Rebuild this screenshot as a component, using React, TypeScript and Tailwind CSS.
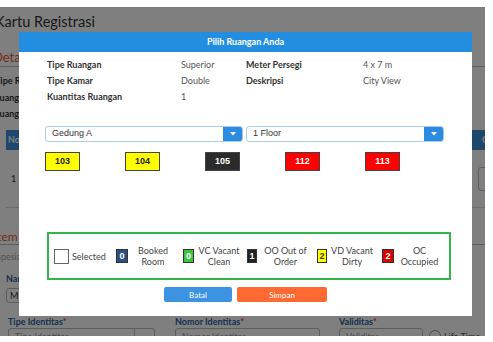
import React from "react";

const lato = { fontFamily: "Lato, 'Open Sans', sans-serif" };
const arial = { fontFamily: "'Liberation Sans', Arial, sans-serif" };

function Caret() {
  return (
    <svg width="6" height="4" viewBox="0 0 6 4">
      <path d="M0 0 L6 0 L3 3.5 Z" fill="#ffffff" />
    </svg>
  );
}

function SelectBox({ label }: { label: string }) {
  return (
    <div className="flex h-[16px] w-[198px] items-stretch rounded-[3px] border border-[#a8cdf0] bg-white">
      <div className="flex flex-1 items-center pl-[6px] text-[9px] text-[#333]" style={arial}>
        {label}
      </div>
      <div className="flex w-[19px] items-center justify-center rounded-r-[2px] bg-[#2a8be0]">
        <Caret />
      </div>
    </div>
  );
}

function Room({ n, bg, fg }: { n: string; bg: string; fg: string }) {
  return (
    <div
      className={`flex h-[19px] w-[35px] items-center justify-center border border-[#444] text-[9px] font-bold ${bg} ${fg}`}
      style={arial}
    >
      {n}
    </div>
  );
}

function Badge({ n, cls, w }: { n: string; cls: string; w: string }) {
  return (
    <div className={`flex h-[14px] shrink-0 items-center justify-center border border-[#333] text-[9px] font-bold ${w} ${cls}`} style={arial}>
      {n}
    </div>
  );
}

export default function App() {
  return (
    <div className="h-[342px] w-[493px] bg-white" style={lato}>
      <div className="relative mt-[7px] h-[329px] w-[485px] overflow-hidden bg-white">
        {/* background page */}
        <div className="flex flex-col">
          <div className="ml-[-5px] mt-[4px] h-[22px] text-[14.5px] leading-[22px] text-[#333]">Kartu Registrasi</div>
          <div className="mt-[16px] flex h-[18px] items-center border-b border-[#bbb] text-[13px] text-[#e2553b]">
            <span className="ml-[-7px]">Detail Kamar</span>
          </div>
          <div className="flex flex-col pt-[6px] text-[9px] font-bold text-[#333]">
            <div className="ml-[-5px] h-[16px] leading-[16px]">Tipe Ruangan</div>
            <div className="ml-[-6px] h-[17px] leading-[17px]">Ruangan</div>
            <div className="ml-[-6px] h-[16px] leading-[16px]">Ruangan</div>
          </div>
          <div className="ml-[6px] mt-[8px] flex h-[20px] items-center bg-[#3a8ed6] pl-[2px] text-[9px] font-bold text-white">
            <span className="w-[474px] shrink-0">No</span>
            <span>Cek</span>
          </div>
          <div className="ml-[6px] flex h-[58px] items-center border-b border-[#ddd]">
            <span className="w-[472px] shrink-0 pl-[5px] text-[9px] text-[#333]">1</span>
            <div className="h-[24px] w-[17px] shrink-0 rounded-[3px] border border-[#bbb]" />
          </div>
          <div className="mt-[21px] flex h-[16px] items-center border-b border-[#bbb] text-[12px] text-[#e2553b]">
            <span className="ml-[-6px]">Item</span>
          </div>
          <div className="mt-[4px] h-[16px] text-[9px] leading-[16px] text-[#aaa]">
            <span className="ml-[-3px]">spesial</span>
          </div>
          <div className="ml-[6px] mt-[8px] h-[12px] text-[9px] font-bold leading-[12px] text-[#2a5f9e]">Nama</div>
          <div className="ml-[6px] mt-[3px] flex h-[15px] w-[150px] items-center rounded-[3px] border border-[#bbb] pl-[3px] text-[9px] text-[#333]">
            M
          </div>
          <div className="mt-[13px] flex h-[12px] text-[9px] font-bold leading-[12px] text-[#2a5f9e]">
            <span className="ml-[8px] w-[167px]">
              Tipe Identitas<span className="text-[#e53935]">*</span>
            </span>
            <span className="w-[164px]">
              Nomor Identitas<span className="text-[#e53935]">*</span>
            </span>
            <span>
              Validitas<span className="text-[#e53935]">*</span>
            </span>
          </div>
          <div className="flex h-[18px] items-start text-[9px] text-[#999]">
            <div className="ml-[8px] flex h-[18px] w-[147px] items-center justify-between rounded-[3px] border border-[#bbb]">
              <span className="pl-[6px]">Tipe Identitas</span>
              <div className="h-full w-[20px] border-l border-[#bbb]" />
            </div>
            <div className="ml-[20px] flex h-[18px] w-[145px] items-center rounded-[3px] border border-[#bbb] pl-[6px]">Nomor Identitas</div>
            <div className="ml-[19px] flex h-[18px] w-[84px] items-center rounded-[3px] border border-[#bbb] pl-[6px]">Validitas</div>
            <div className="ml-[6px] mt-[2px] h-[12px] w-[12px] rounded-full border border-[#999]" />
            <span className="ml-[3px] mt-[2px] text-[#555]">Life Time</span>
          </div>
        </div>

        {/* overlay */}
        <div className="absolute inset-0 bg-black/50" />

        {/* modal */}
        <div className="absolute left-[19px] top-[25px] flex h-[284px] w-[453px] flex-col bg-white">
          <div className="flex h-[20px] items-center justify-center bg-[#238ee0] text-[9px] font-bold text-white">
            Pilih Ruangan Anda
          </div>
          <div className="mt-[5px] grid grid-cols-[134px_65px_117px_1fr] pl-[28px] text-[9px] leading-[16px]">
            <div className="font-bold text-[#333]">Tipe Ruangan</div>
            <div className="text-[#555]">Superior</div>
            <div className="font-bold text-[#333]">Meter Persegi</div>
            <div className="text-[#555]">4 x 7 m</div>
            <div className="font-bold text-[#333]">Tipe Kamar</div>
            <div className="text-[#555]">Double</div>
            <div className="font-bold text-[#333]">Deskripsi</div>
            <div className="text-[#555]">City View</div>
            <div className="font-bold text-[#333]">Kuantitas Ruangan</div>
            <div className="text-[#555]">1</div>
            <div />
            <div />
          </div>
          <div className="mt-[21px] flex gap-[3px] pl-[26px]">
            <SelectBox label="Gedung A" />
            <SelectBox label="1 Floor" />
          </div>
          <div className="mt-[10px] flex gap-[45px] pl-[26px]">
            <Room n="103" bg="bg-[#ffff00]" fg="text-[#222]" />
            <Room n="104" bg="bg-[#ffff00]" fg="text-[#222]" />
            <Room n="105" bg="bg-[#2b2b2b]" fg="text-white" />
            <Room n="112" bg="bg-[#ff0000]" fg="text-white" />
            <Room n="113" bg="bg-[#ff0000]" fg="text-white" />
          </div>
          <div className="ml-[28px] mt-[61px] flex h-[48px] w-[404px] items-center border-2 border-[#34b44a] pl-[5px] text-[9px] leading-[11px] text-[#444]">
            <div className="flex w-[62px] items-center">
              <div className="h-[15px] w-[15px] shrink-0 border border-[#666] bg-white" />
              <span className="ml-[3px]">Selected</span>
            </div>
            <div className="flex w-[67px] items-center">
              <Badge n="0" cls="bg-[#2d4f80] text-white" w="w-[12px]" />
              <span className="w-[50px] text-center">Booked<br />Room</span>
            </div>
            <div className="flex w-[64px] items-center">
              <Badge n="0" cls="bg-[#3cc43c] text-white" w="w-[11px]" />
              <span className="w-[50px] text-center">VC Vacant<br />Clean</span>
            </div>
            <div className="flex w-[70px] items-center">
              <Badge n="1" cls="bg-[#222] text-white" w="w-[10px]" />
              <span className="w-[57px] text-center">OO Out of<br />Order</span>
            </div>
            <div className="flex w-[65px] items-center">
              <Badge n="2" cls="bg-[#ffff00] text-[#333]" w="w-[10px]" />
              <span className="w-[50px] text-center">VD Vacant<br />Dirty</span>
            </div>
            <div className="flex items-center">
              <Badge n="2" cls="bg-[#e00000] text-white" w="w-[12px]" />
              <span className="w-[51px] text-center">OC<br />Occupied</span>
            </div>
          </div>
          <div className="mt-[7px] flex justify-center gap-[5px] text-[8px] text-white">
            <div className="flex h-[15px] w-[68px] items-center justify-center rounded-[2px] bg-[#3b93e2]">Batal</div>
            <div className="flex h-[15px] w-[90px] items-center justify-center rounded-[2px] bg-[#ff6a33]">Simpan</div>
          </div>
        </div>
      </div>
    </div>
  );
}
